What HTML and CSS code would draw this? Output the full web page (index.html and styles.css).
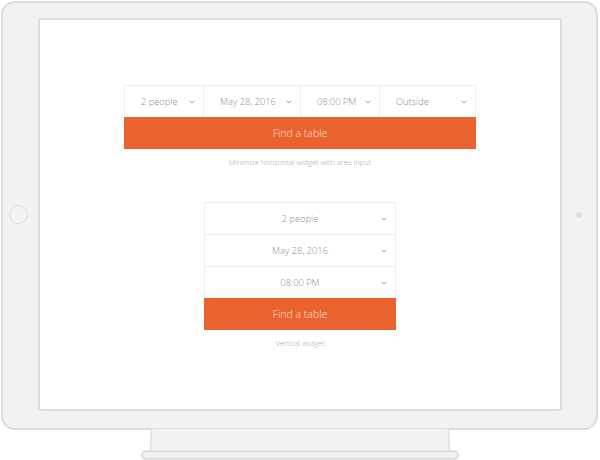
FILE: index.html
```html
<!DOCTYPE html>
<html lang="en">
<head>
    <meta charset="UTF-8">
    <meta name="viewport" content="width=device-width, initial-scale=1.0">
    <title>Table Booking Widgets</title>
    <link rel="stylesheet" href="styles.css">
</head>
<body>

    <!-- Tablet frame -->
    <div class="device">
        <div class="device-side device-side-left">
            <span class="home-button"></span>
        </div>

        <div class="screen">
            <!-- Horizontal widget -->
            <div class="widget widget-horizontal">
                <div class="fields">
                    <div class="field field-small">
                        <span>2 people</span>
                        <svg class="chevron" width="6" height="4" viewBox="0 0 6 4"><path d="M0.6 0.8 L3 3 L5.4 0.8" /></svg>
                    </div>
                    <div class="field field-wide">
                        <span>May 28, 2016</span>
                        <svg class="chevron" width="6" height="4" viewBox="0 0 6 4"><path d="M0.6 0.8 L3 3 L5.4 0.8" /></svg>
                    </div>
                    <div class="field field-small">
                        <span>08:00 PM</span>
                        <svg class="chevron" width="6" height="4" viewBox="0 0 6 4"><path d="M0.6 0.8 L3 3 L5.4 0.8" /></svg>
                    </div>
                    <div class="field field-wide">
                        <span>Outside</span>
                        <svg class="chevron" width="6" height="4" viewBox="0 0 6 4"><path d="M0.6 0.8 L3 3 L5.4 0.8" /></svg>
                    </div>
                </div>
                <button class="find-button">Find a table</button>
            </div>
            <p class="caption">Minimize horizontal widget with area input</p>

            <!-- Vertical widget -->
            <div class="widget widget-vertical">
                <div class="fields">
                    <div class="field">
                        <span>2 people</span>
                        <svg class="chevron" width="6" height="4" viewBox="0 0 6 4"><path d="M0.6 0.8 L3 3 L5.4 0.8" /></svg>
                    </div>
                    <div class="field">
                        <span>May 28, 2016</span>
                        <svg class="chevron" width="6" height="4" viewBox="0 0 6 4"><path d="M0.6 0.8 L3 3 L5.4 0.8" /></svg>
                    </div>
                    <div class="field">
                        <span>08:00 PM</span>
                        <svg class="chevron" width="6" height="4" viewBox="0 0 6 4"><path d="M0.6 0.8 L3 3 L5.4 0.8" /></svg>
                    </div>
                </div>
                <button class="find-button">Find a table</button>
            </div>
            <p class="caption">Vertical widget</p>
        </div>

        <div class="device-side">
            <span class="camera"></span>
        </div>
    </div>

    <!-- Stand -->
    <svg class="stand" width="320" height="31" viewBox="0 0 320 31">
        <path class="stand-neck" d="M11.7 0 L10.5 22 L309.5 22 L308.3 0 Z" />
        <path class="stand-edge" d="M11.7 0 L10.5 22 M308.3 0 L309.5 22" />
        <rect class="stand-base" x="2" y="22.3" width="316" height="7.4" rx="3.7" />
    </svg>

</body>
</html>
```

FILE: styles.css
```css
/* Global Styles */
body {
    font-family: 'Open Sans', 'Liberation Sans', sans-serif;
    font-weight: 300;
    background-color: #ffffff;
    color: #8f8f8f;
    margin: 0;
    width: 600px;
    height: 460px;
    overflow: hidden;
}

/* Tablet frame */
.device {
    box-sizing: border-box;
    width: 597px;
    height: 429px;
    margin: 1px 0 0 1px;
    padding: 15px 0 17px;
    background-color: #f2f2f2;
    border: 2px solid #dddddd;
    border-radius: 14px;
    display: flex;
}

.device-side {
    flex: 1;
    display: flex;
    align-items: center;
    justify-content: center;
}

.device-side-left {
    box-sizing: border-box;
    flex: 0 0 35px;
    justify-content: flex-start;
    padding-left: 6px;
}

.home-button {
    box-sizing: border-box;
    width: 19px;
    height: 19px;
    border: 1.5px solid #dddddd;
    border-radius: 50%;
}

.camera {
    width: 6px;
    height: 6px;
    background-color: #dddddd;
    border-radius: 50%;
}

.screen {
    box-sizing: border-box;
    flex: 0 0 524px;
    background-color: #ffffff;
    border: 2px solid #dddddd;
    border-radius: 3px;
    padding-top: 65px;
    display: flex;
    flex-direction: column;
    align-items: center;
}

/* Widgets */
.widget {
    display: flex;
    flex-direction: column;
}

.widget-horizontal {
    width: 352px;
}

.widget-vertical {
    width: 192px;
    margin-top: 35px;
}

.fields {
    border: 1px solid #eeeeee;
    border-bottom: none;
    display: flex;
}

.widget-vertical .fields {
    flex-direction: column;
}

.field {
    box-sizing: border-box;
    height: 31px;
    font-size: 9.3px;
    white-space: nowrap;
    display: flex;
    align-items: center;
    justify-content: space-between;
    padding: 0 8px 0 16px;
}

.widget-horizontal .field {
    border-right: 1px solid #eeeeee;
}

.widget-horizontal .field:last-child {
    border-right: none;
}

.field-small {
    width: 79px;
}

.field-wide {
    width: 97px;
}

.field-wide:last-child {
    width: 95px;
}

.widget-vertical .field {
    display: grid;
    grid-template-columns: 1fr auto 1fr;
    padding: 0 8px;
    border-top: 1px solid #eeeeee;
    height: 32px;
}

.widget-vertical .field:first-child {
    border-top: none;
    height: 31px;
}

.widget-vertical .field span {
    grid-column: 2;
}

.widget-vertical .field .chevron {
    grid-column: 3;
    justify-self: end;
}

.chevron {
    fill: none;
    stroke: #9a9a9a;
    stroke-width: 1;
}

.find-button {
    height: 32px;
    border: none;
    padding: 0;
    background-color: #ea622d;
    color: #fbe3d9;
    font-family: 'Open Sans', 'Liberation Sans', sans-serif;
    font-weight: 300;
    font-size: 10.5px;
    cursor: pointer;
}

.caption {
    margin: 8px 0 0;
    font-size: 7.5px;
    line-height: 10px;
    color: #a6a6a6;
}

/* Stand */
.stand {
    display: block;
    margin: -1px 0 0 140px;
}

.stand-neck {
    fill: #f2f2f2;
}

.stand-edge {
    fill: none;
    stroke: #dddddd;
    stroke-width: 1.5;
}

.stand-base {
    fill: #f2f2f2;
    stroke: #dddddd;
    stroke-width: 2;
}
```
